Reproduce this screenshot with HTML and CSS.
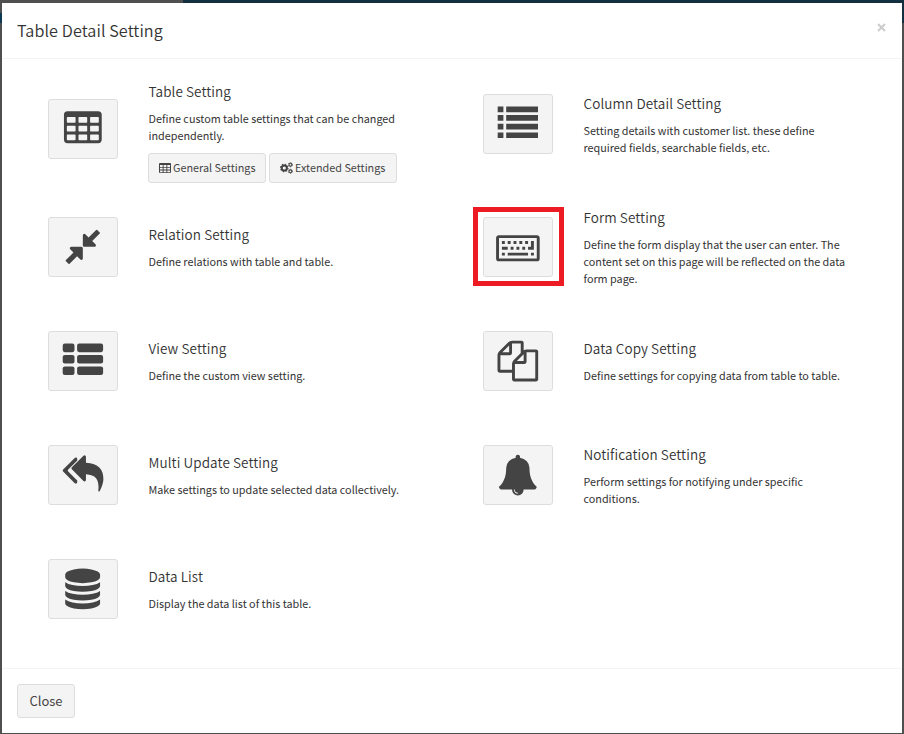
FILE: index.html
```html
<!DOCTYPE html>
<html lang="en">
<head>
<meta charset="utf-8">
<title>Table Detail Setting</title>
<link rel="stylesheet" href="styles.css">
</head>
<body>
<div class="modal">
  <header class="modal-header">
    <h4 class="modal-title">Table Detail Setting</h4>
    <button class="dismiss" aria-label="Close"><svg width="9" height="9" viewBox="0 0 9 9"><path d="M1 1l7 7M8 1l-7 7"/></svg></button>
  </header>
  <main class="modal-body">
    <div class="column">
      <section class="item item-tall">
        <a class="tile"><svg viewBox="0 0 70 60"><path fill-rule="evenodd" transform="translate(14.5 9.3) scale(.0227)" d="M224 128h1344a160 160 0 0 1 160 160v1088a160 160 0 0 1-160 160h-1344a160 160 0 0 1-160-160v-1088a160 160 0 0 1 160-160zM192 416v192q0 32 32 32h320q32 0 32-32v-192q0-32-32-32h-320q-32 0-32 32zM704 416v192q0 32 32 32h320q32 0 32-32v-192q0-32-32-32h-320q-32 0-32 32zM1216 416v192q0 32 32 32h320q32 0 32-32v-192q0-32-32-32h-320q-32 0-32 32zM192 800v192q0 32 32 32h320q32 0 32-32v-192q0-32-32-32h-320q-32 0-32 32zM704 800v192q0 32 32 32h320q32 0 32-32v-192q0-32-32-32h-320q-32 0-32 32zM1216 800v192q0 32 32 32h320q32 0 32-32v-192q0-32-32-32h-320q-32 0-32 32zM192 1184v192q0 32 32 32h320q32 0 32-32v-192q0-32-32-32h-320q-32 0-32 32zM704 1184v192q0 32 32 32h320q32 0 32-32v-192q0-32-32-32h-320q-32 0-32 32zM1216 1184v192q0 32 32 32h320q32 0 32-32v-192q0-32-32-32h-320q-32 0-32 32z"/></svg></a>
        <div class="info">
          <h5>Table Setting</h5>
          <p>Define custom table settings that can be changed<br>independently.</p>
          <div class="actions">
            <a class="small-btn small-btn-general"><svg width="12" height="12" viewBox="0 0 12 12"><path fill-rule="evenodd" d="M1 1h10a1 1 0 0 1 1 1v8a1 1 0 0 1-1 1H1a1 1 0 0 1-1-1V2a1 1 0 0 1 1-1zM1 3v2h2.7V3zM4.6 3v2h2.8V3zM8.3 3v2H11V3zM1 5.8v1.8h2.7V5.8zM4.6 5.8v1.8h2.8V5.8zM8.3 5.8v1.8H11V5.8zM1 8.4v1.8h2.7V8.4zM4.6 8.4v1.8h2.8V8.4zM8.3 8.4v1.8H11V8.4z"/></svg><span>General Settings</span></a>
            <a class="small-btn small-btn-extended"><svg width="13" height="12" viewBox="0 0 13 12"><g class="gear"><circle cx="4.3" cy="6" r="2.6" stroke-width="2"/><circle cx="4.3" cy="6" r="3.7" stroke-width="1.2" stroke-dasharray="1.45 1.456"/><circle cx="10.4" cy="2.7" r="1.4" stroke-width="1.1"/><circle cx="10.4" cy="2.7" r="2.1" stroke-width=".8" stroke-dasharray="1.1 1.1"/><circle cx="10.4" cy="9.3" r="1.4" stroke-width="1.1"/><circle cx="10.4" cy="9.3" r="2.1" stroke-width=".8" stroke-dasharray="1.1 1.1"/></g></svg><span>Extended Settings</span></a>
          </div>
        </div>
      </section>
      <section class="item">
        <a class="tile"><svg viewBox="0 0 70 60"><path transform="translate(14.5 9.5) scale(.0227)" d="M896 960v448q0 26-19 45t-45 19-45-19l-144-144-332 332q-10 10-23 10t-23-10l-114-114q-10-10-10-23t10-23l332-332-144-144q-19-19-19-45t19-45 45-19h448q26 0 45 19t19 45zm755-672q0 13-10 23l-332 332 144 144q19 19 19 45t-19 45-45 19h-448q-26 0-45-19t-19-45v-448q0-26 19-45t45-19 45 19l144 144 332-332q10-10 23-10t23 10l114 114q10 10 10 23z"/></svg></a>
        <div class="info"><h5>Relation Setting</h5><p>Define relations with table and table.</p></div>
      </section>
      <section class="item">
        <a class="tile"><svg viewBox="0 0 70 60"><rect x="14.7" y="12.6" width="11.8" height="8.6" rx="2.1"/><rect x="29.1" y="12.6" width="26" height="8.6" rx="2.1"/><rect x="14.7" y="24" width="11.8" height="8.6" rx="2.1"/><rect x="29.1" y="24" width="26" height="8.6" rx="2.1"/><rect x="14.7" y="35.4" width="11.8" height="8.6" rx="2.1"/><rect x="29.1" y="35.4" width="26" height="8.6" rx="2.1"/></svg></a>
        <div class="info"><h5>View Setting</h5><p>Define the custom view setting.</p></div>
      </section>
      <section class="item">
        <a class="tile"><svg viewBox="0 0 70 60"><path transform="translate(14.7 11) scale(.0227)" d="M640 1082v70q0 42-39 59-13 5-25 5-27 0-45-19l-512-512q-19-19-19-45t19-45l512-512q29-31 70-14 39 17 39 59v69l-397 398q-19 19-19 45t19 45zm1152-58q0 58-17 133.5t-38.5 138-48 125-40.5 90.5l-20 40q-8 17-28 17-6 0-9-1-25-8-23-34 43-400-106-565-64-71-170.5-110.5t-267.5-52.5v251q0 42-39 59-13 5-25 5-27 0-45-19l-512-512q-19-19-19-45t19-45l512-512q29-31 70-14 39 17 39 59v262q411 28 599 221 169 173 169 509z"/></svg></a>
        <div class="info"><h5>Multi Update Setting</h5><p>Make settings to update selected data collectively.</p></div>
      </section>
      <section class="item">
        <a class="tile"><svg viewBox="0 0 70 60"><path transform="translate(14.3 9.6) scale(.0227)" d="M896 768q237 0 443-43t325-127v170q0 69-103 128t-280 93.500-385 34.500-385-34.500-280-93.500-103-128v-170q119 84 325 127t443 43zm0 768q237 0 443-43t325-127v170q0 69-103 128t-280 93.500-385 34.500-385-34.500-280-93.500-103-128v-170q119 84 325 127t443 43zm0-384q237 0 443-43t325-127v170q0 69-103 128t-280 93.500-385 34.500-385-34.500-280-93.500-103-128v-170q119 84 325 127t443 43zm0-1152q208 0 385 34.500t280 93.500 103 128v128q0 69-103 128t-280 93.500-385 34.500-385-34.500-280-93.500-103-128v-128q0-69 103-128t280-93.500 385-34.500z"/></svg></a>
        <div class="info"><h5>Data List</h5><p>Display the data list of this table.</p></div>
      </section>
    </div>
    <div class="column">
      <section class="item">
        <a class="tile"><svg viewBox="0 0 70 60"><path d="M14.700 12.500h5.700v5.700h-5.700zM23.200 12.500H55v5.700H23.200zM14.700 21.100h5.700v5.700h-5.700zM23.200 21.100H55v5.700H23.200zM14.700 29.800h5.700v5.700h-5.700zM23.200 29.800H55v5.700H23.200zM14.700 38.400h5.700v5.700h-5.700zM23.200 38.400H55v5.700H23.200z"/></svg></a>
        <div class="info"><h5>Column Detail Setting</h5><p>Setting details with customer list. these define<br>required fields, searchable fields, etc.</p></div>
      </section>
      <section class="item item-gap">
        <a class="tile tile-marked"><svg viewBox="0 0 70 60"><path fill-rule="evenodd" transform="translate(13.1 9.500) scale(.0227)" d="M128 384h1664q128 0 128 128v896q0 128-128 128h-1664q-128 0-128-128v-896q0-128 128-128zM128 512v896h1664v-896zM256 640h128v128h-128zM512 640h128v128h-128zM768 640h128v128h-128zM1024 640h128v128h-128zM1280 640h128v128h-128zM1536 640h128v384h-256v-128h128zM256 896h256v128h-256zM640 896h128v128h-128zM896 896h128v128h-128zM1152 896h128v128h-128zM256 1152h128v128h-128zM512 1152h896v128h-896zM1536 1152h128v128h-128z"/></svg></a>
        <div class="info"><h5>Form Setting</h5><p>Define the form display that the user can enter. The<br>content set on this page will be reflected on the data<br>form page.</p></div>
      </section>
      <section class="item">
        <a class="tile"><svg viewBox="0 0 70 60"><path transform="translate(14.500 9.700) scale(.0227)" d="M1696 384q40 0 68 28t28 68v1216q0 40-28 68t-68 28h-960q-40 0-68-28t-28-68v-288h-544q-40 0-68-28t-28-68v-672q0-40 20-88t48-76l408-408q28-28 76-48t88-20h416q40 0 68 28t28 68v328q68-40 128-40h416zm-544 213l-299 299h299v-299zm-640-384l-299 299h299v-299zm196 647l316-316v-416h-384v416q0 40-28 68t-68 28h-416v640h512v-256q0-40 20-88t48-76zm956 804v-1152h-384v416q0 40-28 68t-68 28h-416v640h896z"/></svg></a>
        <div class="info"><h5>Data Copy Setting</h5><p>Define settings for copying data from table to table.</p></div>
      </section>
      <section class="item">
        <a class="tile"><svg viewBox="0 0 70 60"><path transform="translate(14.500 9.700) scale(.0227)" d="M912 1696q0-16-16-16-59 0-101.500-42.500t-42.500-101.500q0-16-16-16t-16 16q0 73 51.500 124.500t124.500 51.500q16 0 16-16zm816-288q0 52-38 90t-90 38h-448q0 106-75 181t-181 75-181-75-75-181h-448q-52 0-90-38t-38-90q50-42 91-88t85-119.500 74.500-158.500 50-206 19.500-260q0-152 117-282.500t307-158.500q-8-19-8-39 0-40 28-68t68-28 68 28 28 68q0 20-8 39 190 28 307 158.500t117 282.500q0 139 19.500 260t50 206 74.500 158.500 85 119.500 91 88z"/></svg></a>
        <div class="info"><h5>Notification Setting</h5><p>Perform settings for notifying under specific<br>conditions.</p></div>
      </section>
    </div>
  </main>
  <footer class="modal-footer"><button class="close-btn">Close</button></footer>
</div>
</body>
</html>
```

FILE: styles.css
```css
* { box-sizing: border-box; }
html, body { height: 100%; }
body {
  margin: 0;
  padding: 3px 2px 1px;
  overflow: hidden;
  font-family: "Noto Sans CJK JP", sans-serif;
  color: #333;
  background:
    linear-gradient(#0c3a54, #0c3a54) 0 13px / 2px 10px no-repeat,
    linear-gradient(#505050, #505050) 0 0 / 183px 3px no-repeat,
    linear-gradient(#12303f, #12303f) 183px 0 / 721px 23px no-repeat,
    #4f4f4f;
}
h4, h5, p { margin: 0; font-weight: 400; }
svg { display: block; fill: #444; }
.modal { height: 730px; background: #fff; display: flex; flex-direction: column; }
.modal-header {
  height: 56px;
  border-bottom: 1px solid #f4f4f4;
  padding: 0 15px;
  display: flex;
  justify-content: space-between;
}
.modal-title { font-size: 16.2px; font-weight: 350; line-height: 24px; padding-top: 15px; letter-spacing: .08px; }
.dismiss { border: 0; background: none; padding: 20px 1px 0 0; align-self: flex-start; }
.dismiss path { stroke: #ccc; stroke-width: 2; }
.modal-body { flex: 1; padding: 8px 0 0 46px; display: flex; }
.column { width: 435px; flex: none; }
.item { height: 114px; display: flex; align-items: center; }
.item-tall { height: 123px; }
.item-gap { margin-top: 9px; }
.tile {
  position: relative;
  width: 70px;
  height: 60px;
  flex: none;
  border: 1px solid #ddd;
  border-radius: 3px;
  background: #f4f4f4;
  margin-right: 30px;
}
.tile svg { width: 70px; height: 60px; margin: -1px; }
.tile-marked::after {
  content: "";
  position: absolute;
  inset: -11px -12px -10px -11px;
  border: 5px solid #ed1c24;
}
.info { padding: 1px 0 0 .5px; white-space: nowrap; }
.item-tall .info { padding-top: 7px; }
h5 { font-size: 13.5px; font-weight: 350; line-height: 18px; margin-bottom: 10px; letter-spacing: .1px; }
p { font-size: 10.8px; line-height: 17px; }
.actions { display: flex; gap: 3px; margin: 9px 0 0 -.5px; }
.small-btn {
  height: 30px;
  border: 1px solid #ddd;
  border-radius: 3px;
  background: #f4f4f4;
  color: #444;
  font-size: 10.82px;
  display: flex;
  align-items: center;
  padding-left: 10px;
  gap: 2px;
}
.small-btn span { margin-top: -2px; }
.small-btn-general { width: 118px; }
.small-btn-extended { width: 128px; }
.gear circle { fill: none; stroke: #444; }
.modal-footer { height: 65px; border-top: 1px solid #f4f4f4; padding: 15px; }
.close-btn {
  display: block;
  width: 58px;
  height: 34px;
  padding: 0;
  border: 1px solid #ddd;
  border-radius: 3px;
  background: #f4f4f4;
  color: #444;
  font: 13px/30px "Noto Sans CJK JP", sans-serif;
}
```
